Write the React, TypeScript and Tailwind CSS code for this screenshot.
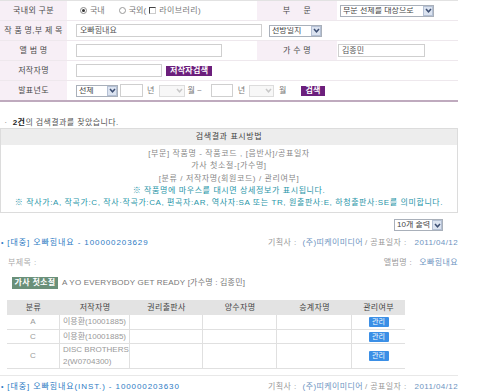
import React from "react";

function Sel({ w, label, disabled }: { w: string; label?: string; disabled?: boolean }) {
  return (
    <div
      className={`${w} h-[12px] shrink-0 flex items-center border ${
        disabled ? "border-[#dcdcdc] bg-[#f7f7f7]" : "border-[#a9b0ba] bg-white"
      }`}
    >
      <span className="flex-1 pl-[2px] text-[8px] leading-none text-[#444] whitespace-nowrap overflow-hidden">{label}</span>
      <span
        className={`w-[10px] h-[10px] flex items-center justify-center ${
          disabled ? "" : "bg-[#dbe3f0] border border-[#b4c0d4]"
        }`}
      >
        <svg width="7" height="5" viewBox="0 0 7 5">
          <path d="M1 1 L3.5 3.8 L6 1" fill="none" stroke={disabled ? "#c8c8c8" : "#3d4f73"} strokeWidth="1.5" />
        </svg>
      </span>
    </div>
  );
}

function Input({ w, value }: { w: string; value?: string }) {
  return (
    <div className={`${w} h-[13px] shrink-0 border border-[#cfcfcf] bg-white flex items-center pl-[3px] text-[8px] text-[#555]`}>
      {value}
    </div>
  );
}

function Label({ children, w = "w-[67px]" }: { children: React.ReactNode; w?: string }) {
  return (
    <div className={`${w} shrink-0 bg-[#f7eff6] flex items-center justify-center text-[8px] tracking-[0.3px] text-[#4a4a4a] whitespace-nowrap`}>
      {children}
    </div>
  );
}

function PurpleBtn({ children }: { children: React.ReactNode }) {
  return (
    <span className="h-[10px] px-[4px] bg-[#6c1f7c] text-white font-bold text-[8px] leading-[10px] tracking-[0.3px] whitespace-nowrap">
      {children}
    </span>
  );
}

function Manage() {
  return (
    <span className="w-[20px] h-[10px] bg-[#3b8fe6] text-white text-[7px] leading-[10px] text-center rounded-[1px]">관리</span>
  );
}

const rows = [
  { cls: "A", name: ["이용환(10001885)"], h: "h-[15px]" },
  { cls: "C", name: ["이용환(10001885)"], h: "h-[14px]" },
  { cls: "C", name: ["DISC BROTHERS", "2(W0704300)"], h: "h-[25px]" },
];

function InfoLine() {
  return (
    <div className="flex items-center text-[8px] tracking-[0.4px] whitespace-nowrap">
      <span className="text-[#999]">기획사 :</span>
      <span className="ml-[6px] text-[#6d94bf]">(주)띠케이미디어</span>
      <span className="ml-[2px] text-[#999]">/ 공표일자 :</span>
      <span className="ml-[8px] text-[#6d94bf]">2011/04/12</span>
    </div>
  );
}

export default function App() {
  return (
    <div className="w-[480px] h-[392px] overflow-hidden bg-white font-[family-name:'Liberation_Sans','Noto_Sans_CJK_KR',sans-serif] text-[8px] text-[#555]">
      <div className="w-[458px]">
        {/* search form */}
        <div className="border-t border-[#e2e2e2] border-b-2 border-b-[#bfaabe]">
          <div className="flex h-[20px] border-b border-[#eee8ed]">
            <Label>국내외 구분</Label>
            <div className="w-[190px] pl-[13px] flex items-center text-[8px] text-[#777] whitespace-nowrap">
              <span className="w-[7px] h-[7px] rounded-full border border-[#8a8a8a] flex items-center justify-center">
                <span className="w-[3px] h-[3px] rounded-full bg-[#333]" />
              </span>
              <span className="ml-[3px]">국내</span>
              <span className="ml-[14px] w-[7px] h-[7px] rounded-full border border-[#999]" />
              <span className="ml-[3px]">국외(</span>
              <span className="ml-[3px] w-[7px] h-[7px] border-t-[1.5px] border-l-[1.5px] border-r border-b border-t-[#444] border-l-[#444] border-r-[#ccc] border-b-[#ccc]" />
              <span className="ml-[3px] tracking-[0.4px]">라이브러리)</span>
            </div>
            <Label w="w-[80px]">
              <span className="flex gap-[13px]">
                <span>부</span>
                <span>문</span>
              </span>
            </Label>
            <div className="pl-[3px] flex items-center">
              <Sel w="w-[94px]" label="부문 전체를 대상으로" />
            </div>
          </div>

          <div className="flex h-[20px] border-b border-[#eee8ed]">
            <Label>작 품 명,부 제 목</Label>
            <div className="pl-[9px] flex items-center gap-[7px]">
              <Input w="w-[186px]" value="오빠힘내요" />
              <Sel w="w-[53px]" label="전방일치" />
            </div>
          </div>

          <div className="flex h-[20px] border-b border-[#eee8ed]">
            <Label>앨 범 명</Label>
            <div className="w-[190px] pl-[9px] flex items-center">
              <Input w="w-[146px]" />
            </div>
            <Label w="w-[80px]">가 수 명</Label>
            <div className="pl-[1px] flex items-center">
              <Input w="w-[87px]" value="김종민" />
            </div>
          </div>

          <div className="flex h-[20px] border-b border-[#eee8ed]">
            <Label>저작자명</Label>
            <div className="pl-[9px] flex items-center gap-[4px]">
              <Input w="w-[86px]" />
              <PurpleBtn>저작자검색</PurpleBtn>
            </div>
          </div>

          <div className="flex h-[19px]">
            <Label>발표년도</Label>
            <div className="pl-[9px] flex items-center text-[#777] whitespace-nowrap">
              <Sel w="w-[42px]" label="전체" />
              <span className="ml-[2px]"><Input w="w-[23px]" /></span>
              <span className="ml-[4px]">년</span>
              <span className="ml-[5px]"><Sel w="w-[26px]" disabled /></span>
              <span className="ml-[2px]">월 ~</span>
              <span className="ml-[9px]"><Input w="w-[22px]" /></span>
              <span className="ml-[5px]">년</span>
              <span className="ml-[4px]"><Sel w="w-[25px]" disabled /></span>
              <span className="ml-[5px]">월</span>
              <span className="ml-[15px] flex"><PurpleBtn>검색</PurpleBtn></span>
            </div>
          </div>
        </div>

        {/* result count */}
        <div className="mt-[15px] h-[11px] flex items-center text-[#555] whitespace-nowrap tracking-[0.4px]">
          <span className="ml-[2px] text-[#999]">ㆍ</span>
          <span className="ml-[3px] font-bold text-[#222]">2건</span>
          <span>의 검색결과를 찾았습니다.</span>
        </div>

        {/* legend box */}
        <div className="border border-[#dcdcdc]">
          <div className="h-[16px] bg-[#ededed] flex items-center justify-center text-[#444] tracking-[0.6px]">검색결과 표시방법</div>
          <div className="pt-[3px] pb-[3px] flex flex-col items-center leading-[12.3px] text-[#888] whitespace-nowrap tracking-[0.6px]">
            <span>[부문] 작품명 - 작품코드 , [음반사]/공표일자</span>
            <span>가사 첫소절-[가수명]</span>
            <span>[분류 / 저작자명(회원코드) / 관리여부]</span>
            <span className="text-[#1f95a8]">※ 작품명에 마우스를 대시면 상세정보가 표시됩니다.</span>
            <span className="text-[#1f95a8]">
              ※ 작사가:A, 작곡가:C, 작사·작곡가:CA, 편곡자:AR, 역사자:SA 또는 TR, 원출판사:E, 하청출판사:SE를 의미합니다.
            </span>
          </div>
        </div>

        <div className="mt-[6px] pr-[15px] flex justify-end">
          <Sel w="w-[49px]" label="10개 출력" />
        </div>

        {/* result 1 */}
        <div className="mt-[7px] h-[10px] flex items-center justify-between whitespace-nowrap">
          <div className="flex items-center text-[#2d7bc4] tracking-[0.9px]">
            <span className="ml-[1px] text-[7px]">•</span>
            <span className="ml-[3px]">[대중] 오빠힘내요 - 100000203629</span>
          </div>
          <InfoLine />
        </div>
        <div className="mt-[10px] h-[10px] flex items-center justify-between whitespace-nowrap tracking-[0.4px]">
          <span className="ml-[8px] text-[#aaa]">부제목 :</span>
          <span>
            <span className="text-[#999]">앨범명 :</span>
            <span className="ml-[7px] text-[#6d94bf]">오빠힘내요</span>
          </span>
        </div>
        <div className="mt-[9px] h-[12px] flex items-center whitespace-nowrap">
          <span className="ml-[12px] w-[46px] h-[12px] bg-[#6a9079] text-white font-bold flex items-center justify-center tracking-[0.3px]">가사 첫소절</span>
          <span className="ml-[4px] text-[#777] tracking-[0.2px]">A YO EVERYBODY GET READY [가수명 : 김종민]</span>
        </div>

        <div className="mt-[11px] ml-[7px] w-[398px]">
          <div className="grid grid-cols-[53px_70px_73px_74px_75px_53px] h-[15px] bg-[#e3e3e3] items-center text-center text-[#444] tracking-[0.3px]">
            <span>분류</span>
            <span>저작자명</span>
            <span>권리출판사</span>
            <span>양수자명</span>
            <span>승계자명</span>
            <span>관리여부</span>
          </div>
          {rows.map((r, i) => (
            <div key={i} className={`grid grid-cols-[53px_70px_73px_74px_75px_53px] ${r.h} border-b border-[#e0e0e0] text-[#999]`}>
              <span className="flex items-center justify-center border-r border-[#e0e0e0]">{r.cls}</span>
              <span className="flex flex-col justify-center pl-[3px] leading-[12px] whitespace-nowrap border-r border-[#e0e0e0]">
                {r.name.map((n) => (
                  <span key={n}>{n}</span>
                ))}
              </span>
              <span className="border-r border-[#e0e0e0]" />
              <span className="border-r border-[#e0e0e0]" />
              <span className="border-r border-[#e0e0e0]" />
              <span className="flex items-center justify-center">
                <Manage />
              </span>
            </div>
          ))}
        </div>

        <div className="mt-[6px] border-t border-[#e8e8e8]" />
        <div className="mt-[6px] h-[10px] flex items-center justify-between whitespace-nowrap">
          <div className="flex items-center text-[#2d7bc4] tracking-[0.9px]">
            <span className="ml-[1px] text-[7px]">•</span>
            <span className="ml-[3px]">[대중] 오빠힘내요(INST.) - 100000203630</span>
          </div>
          <InfoLine />
        </div>
        <div className="mt-[2px] border-t border-[#e8e8e8]" />
      </div>
    </div>
  );
}
